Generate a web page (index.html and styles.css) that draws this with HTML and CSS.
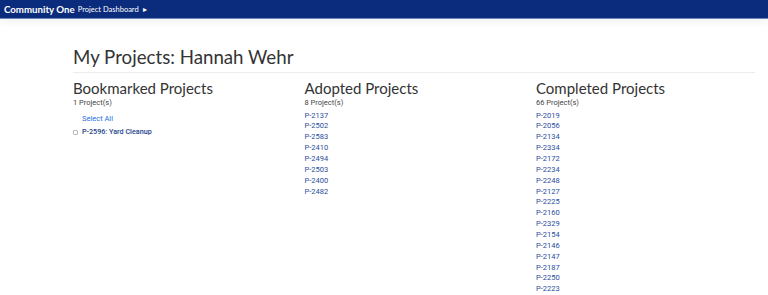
FILE: index.html
```html
<!DOCTYPE html>
<html lang="en">
<head>
  <meta charset="utf-8" />
  <meta name="viewport" content="width=device-width, initial-scale=1" />
  <title>Community One - My Projects</title>
  <link rel="stylesheet" href="styles.css">
</head>
<body>
  <nav class="topbar">
    <span class="brand">Community One</span>
    <span class="crumb">Project Dashboard</span>
    <span class="caret">&#9656;</span>
  </nav>

  <main class="container">
    <h1>My Projects: Hannah Wehr</h1>
    <hr />

    <div class="columns">
      <section class="col">
        <h2>Bookmarked Projects</h2>
        <p class="count">1 Project(s)</p>
        <a class="select-all" href="#">Select All</a>
        <label class="bookmark">
          <input type="checkbox" />
          <span>P-2596: Yard Cleanup</span>
        </label>
      </section>

      <section class="col">
        <h2>Adopted Projects</h2>
        <p class="count">8 Project(s)</p>
        <ul class="list">
          <li><a href="#">P-2137</a></li>
          <li><a href="#">P-2502</a></li>
          <li><a href="#">P-2583</a></li>
          <li><a href="#">P-2410</a></li>
          <li><a href="#">P-2494</a></li>
          <li><a href="#">P-2503</a></li>
          <li><a href="#">P-2400</a></li>
          <li><a href="#">P-2482</a></li>
        </ul>
      </section>

      <section class="col">
        <h2>Completed Projects</h2>
        <p class="count">66 Project(s)</p>
        <ul class="list">
          <li><a href="#">P-2019</a></li>
          <li><a href="#">P-2056</a></li>
          <li><a href="#">P-2134</a></li>
          <li><a href="#">P-2334</a></li>
          <li><a href="#">P-2172</a></li>
          <li><a href="#">P-2234</a></li>
          <li><a href="#">P-2248</a></li>
          <li><a href="#">P-2127</a></li>
          <li><a href="#">P-2225</a></li>
          <li><a href="#">P-2160</a></li>
          <li><a href="#">P-2329</a></li>
          <li><a href="#">P-2154</a></li>
          <li><a href="#">P-2146</a></li>
          <li><a href="#">P-2147</a></li>
          <li><a href="#">P-2187</a></li>
          <li><a href="#">P-2250</a></li>
          <li><a href="#">P-2223</a></li>
        </ul>
      </section>
    </div>
  </main>
</body>
</html>
```

FILE: styles.css
```css
body {
  margin: 0;
  font-family: Roboto, "Liberation Sans", Arial, sans-serif;
  color: #333;
  background: #fff;
  overflow: hidden;
}
.topbar {
  height: 19px;
  background: #0b2b7c;
  border-bottom: 1px solid #6f86bd;
  box-sizing: border-box;
  display: flex;
  align-items: center;
  padding-left: 4px;
  color: #fff;
  font-family: Lato, sans-serif;
  box-shadow: 0 3px 8px rgba(0, 0, 0, 0.06);
}
.brand {
  font-weight: 700;
  font-size: 9.7px;
}
.crumb {
  font-size: 7.5px;
  margin-left: 3px;
}
.caret {
  font-size: 8px;
  margin-left: 4px;
}
.container {
  width: 682px;
  margin-left: 73px;
  padding-top: 27px;
}
h1 {
  font-family: Lato, sans-serif;
  font-weight: 400;
  font-size: 18.7px;
  color: #333;
  margin: 0;
  line-height: 22px;
}
hr {
  border: 0;
  border-top: 1px solid #ececec;
  margin: 4px 0 0;
}
.columns {
  display: grid;
  grid-template-columns: 231.5px 231.5px 231.5px;
  width: 695px;
}
h2 {
  font-family: Lato, sans-serif;
  font-weight: 400;
  font-size: 15px;
  color: #333;
  margin: 6px 0 0;
  line-height: 18px;
}
.count {
  font-size: 7.5px;
  margin: 1px 0 0;
  line-height: 10px;
  color: #444;
}
a {
  text-decoration: none;
}
.select-all {
  display: block;
  margin: 6px 0 0 9px;
  font-size: 7.5px;
  line-height: 10px;
  color: #1f6fe0;
}
.bookmark {
  display: flex;
  align-items: center;
  margin-top: 3px;
  font-size: 7.2px;
  line-height: 10px;
  color: #243f8c;
  font-weight: 500;
}
.bookmark input {
  appearance: none;
  width: 5px;
  height: 5px;
  border: 1px solid #bbb;
  border-radius: 1px;
  margin: 0 4px 0 0;
  box-sizing: border-box;
}
.list {
  list-style: none;
  margin: 2.5px 0 0;
  padding: 0;
}
.list li {
  font-size: 7.5px;
  line-height: 10.86px;
}
.list a {
  color: #2c4d9c;
}
```
